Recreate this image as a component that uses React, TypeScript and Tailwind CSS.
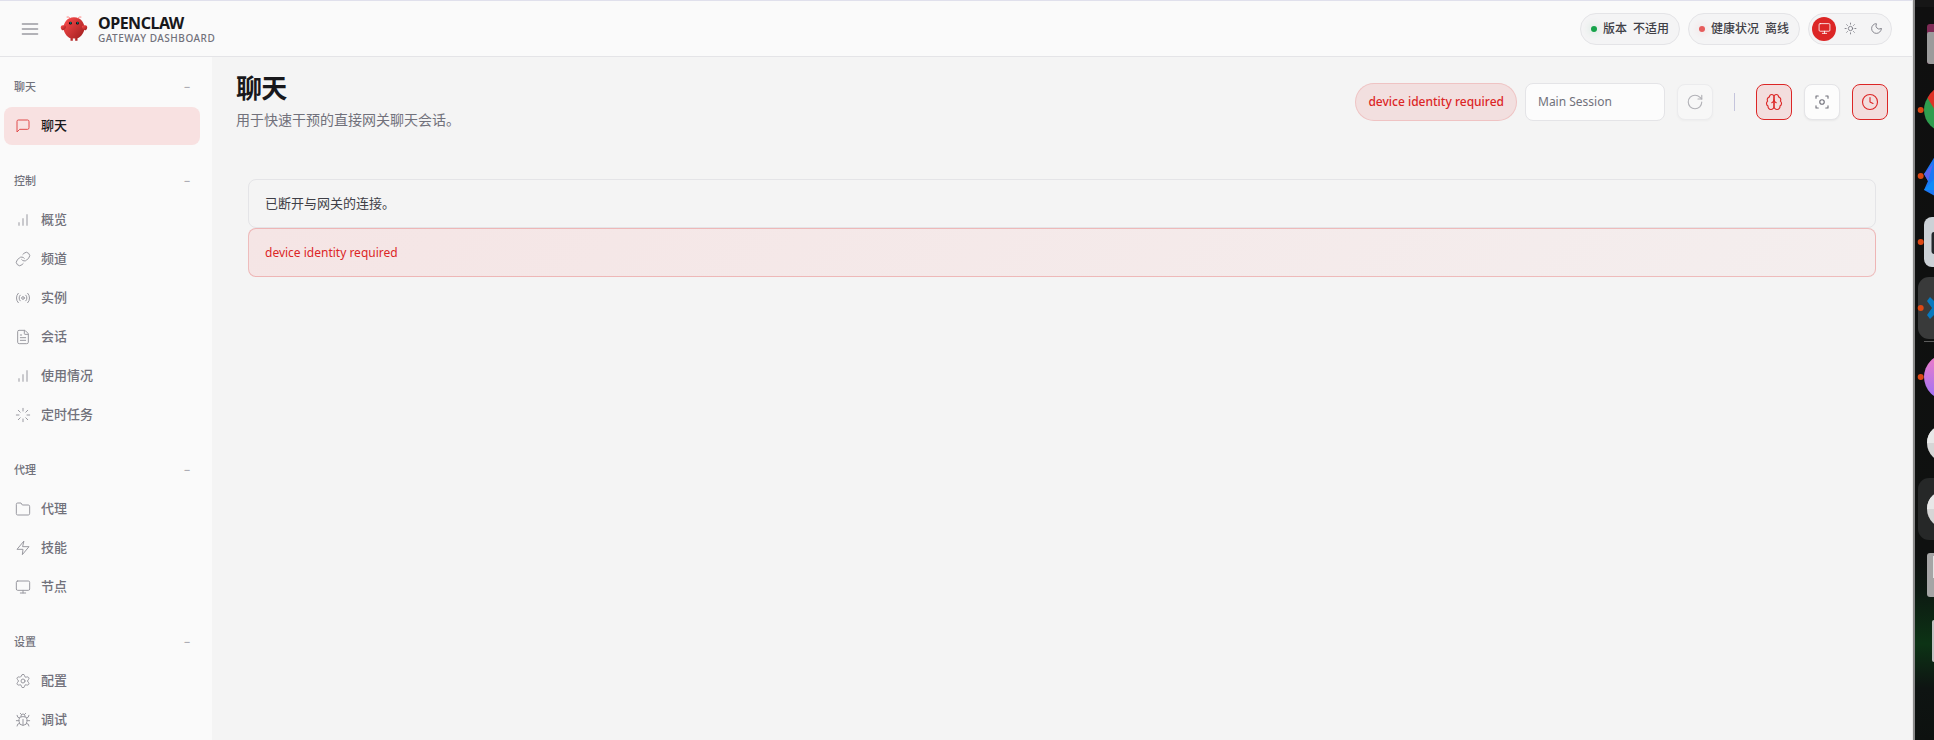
import type { ReactNode } from "react";
import { Bug, FileText, Link, Loader, Monitor, Moon, Radio, RotateCw, Settings } from "lucide-react";

type IconProps = { children: ReactNode; size?: number };

function Icon({ children, size = 16 }: IconProps) {
  return (
    <svg
      width={size}
      height={size}
      viewBox="0 0 24 24"
      fill="none"
      stroke="currentColor"
      strokeWidth={1.5}
      strokeLinecap="round"
      strokeLinejoin="round"
      className="shrink-0"
      aria-hidden="true"
    >
      {children}
    </svg>
  );
}

const chatIcon = (
  <Icon>
    <path d="M21 15a2 2 0 0 1-2 2H7l-4 4V5a2 2 0 0 1 2-2h14a2 2 0 0 1 2 2z" />
  </Icon>
);

const barsIcon = (
  <Icon>
    <path d="M12 20V10M18 20V4M6 20v-4" />
  </Icon>
);

const folderIcon = (
  <Icon>
    <path d="M22 19a2 2 0 0 1-2 2H4a2 2 0 0 1-2-2V5a2 2 0 0 1 2-2h5l2 3h9a2 2 0 0 1 2 2z" />
  </Icon>
);

const zapIcon = (
  <Icon>
    <path d="M13 2 3 14h9l-1 8 10-12h-9z" />
  </Icon>
);

const GROUPS = [
  { title: "聊天", items: [{ label: "聊天", icon: chatIcon, active: true }] },
  {
    title: "控制",
    items: [
      { label: "概览", icon: barsIcon },
      { label: "频道", icon: <Link size={16} strokeWidth={1.5} /> },
      { label: "实例", icon: <Radio size={16} strokeWidth={1.5} /> },
      { label: "会话", icon: <FileText size={16} strokeWidth={1.5} /> },
      { label: "使用情况", icon: barsIcon },
      { label: "定时任务", icon: <Loader size={16} strokeWidth={1.5} /> },
    ],
  },
  {
    title: "代理",
    items: [
      { label: "代理", icon: folderIcon },
      { label: "技能", icon: zapIcon },
      { label: "节点", icon: <Monitor size={16} strokeWidth={1.5} /> },
    ],
  },
  {
    title: "设置",
    items: [
      { label: "配置", icon: <Settings size={16} strokeWidth={1.5} /> },
      { label: "调试", icon: <Bug size={16} strokeWidth={1.5} /> },
    ],
  },
];

function Logo() {
  return (
    <svg width="28" height="28" viewBox="0 0 120 120" fill="none" aria-hidden="true">
      <defs>
        <linearGradient id="claw" x1="0%" y1="0%" x2="100%" y2="100%">
          <stop offset="0%" stopColor="#ff4d4d" />
          <stop offset="100%" stopColor="#991b1b" />
        </linearGradient>
      </defs>
      <path
        d="M60 10C30 10 15 35 15 55C15 75 30 95 45 100L45 110L55 110L55 100C55 100 60 102 65 100L65 110L75 110L75 100C90 95 105 75 105 55C105 35 90 10 60 10Z"
        fill="url(#claw)"
      />
      <path d="M20 45C5 40 0 50 5 60C10 70 20 65 25 55C28 48 25 45 20 45Z" fill="url(#claw)" />
      <path d="M100 45C115 40 120 50 115 60C110 70 100 65 95 55C92 48 95 45 100 45Z" fill="url(#claw)" />
      <path d="M45 15Q35 5 30 8M75 15Q85 5 90 8" stroke="#ff4d4d" strokeWidth="3" strokeLinecap="round" />
      <circle cx="45" cy="35" r="6" fill="#050810" />
      <circle cx="75" cy="35" r="6" fill="#050810" />
      <circle cx="46" cy="34" r="2.5" fill="#00e5cc" />
      <circle cx="76" cy="34" r="2.5" fill="#00e5cc" />
    </svg>
  );
}

function Header() {
  return (
    <header className="flex h-14 shrink-0 items-center justify-between border-b border-zinc-200 bg-[#fafafa] pl-3 pr-5">
      <div className="flex items-center gap-3">
        <button type="button" aria-label="菜单" className="flex size-9 items-center justify-center text-zinc-500/70">
          <Icon size={20}>
            <path d="M3 12h18M3 6h18M3 18h18" strokeWidth={2} />
          </Icon>
        </button>
        <div className="flex items-center gap-[10px]">
          <Logo />
          <div>
            <div className="text-[16px] leading-[18px] font-bold tracking-[-0.03em] text-zinc-900">OPENCLAW</div>
            <div className="text-[10px] leading-[12px] font-medium tracking-[0.05em] text-zinc-500">
              GATEWAY DASHBOARD
            </div>
          </div>
        </div>
      </div>
      <div className="flex items-center gap-2">
        <StatusPill label="版本" value="不适用" dot="bg-[#16a34a] shadow-[0_0_8px_rgba(22,163,74,0.3)]" />
        <StatusPill label="健康状况" value="离线" dot="bg-[#e65c5c] shadow-[0_0_8px_rgba(220,38,38,0.2)]" />
        <div className="flex h-8 items-center gap-[2px] rounded-full border border-zinc-200 bg-[#f4f4f5] px-[3px]">
          <button type="button" aria-label="系统主题" className="flex size-6 items-center justify-center rounded-full bg-[#dc2626] text-white">
            <Monitor size={13} strokeWidth={1.5} />
          </button>
          <button type="button" aria-label="浅色主题" className="flex size-6 items-center justify-center text-zinc-500">
            <Icon size={13}>
              <circle cx="12" cy="12" r="4" />
              <path d="M12 2v2M12 20v2M4.93 4.93l1.41 1.41M17.66 17.66l1.41 1.41M2 12h2M20 12h2M6.34 17.66l-1.41 1.41M19.07 4.93l-1.41 1.41" />
            </Icon>
          </button>
          <button type="button" aria-label="深色主题" className="flex size-6 items-center justify-center text-zinc-500">
            <Moon size={13} strokeWidth={1.5} />
          </button>
        </div>
      </div>
    </header>
  );
}

function StatusPill({ label, value, dot }: { label: string; value: string; dot: string }) {
  return (
    <div className="flex h-8 items-center gap-[6px] rounded-full border border-zinc-200 bg-[#f4f4f5] px-[10px] text-[12px] font-medium text-zinc-700">
      <span className={`size-[6px] rounded-full ${dot}`} />
      <span>{label}</span>
      <span>{value}</span>
    </div>
  );
}

function Sidebar() {
  return (
    <nav className="flex w-[212px] shrink-0 flex-col gap-[22px] overflow-hidden bg-[#fafafa] pt-4 pr-3 pl-1">
      {GROUPS.map((group) => (
        <div key={group.title} className="flex shrink-0 flex-col gap-[6px]">
          <button
            type="button"
            className="flex h-7 items-center justify-between px-[10px] text-[11px] font-medium text-zinc-500"
          >
            <span>{group.title}</span>
            <span className="text-zinc-400">−</span>
          </button>
          <div className="flex flex-col gap-px">
            {group.items.map((item) => (
              <a
                key={item.label}
                href="#"
                className={`flex h-[38px] items-center gap-[10px] rounded-lg px-[11px] text-[13px] font-medium ${
                  "active" in item ? "bg-[#f8e1e1] text-zinc-900" : "text-zinc-500"
                }`}
              >
                <span className={"active" in item ? "text-[#dc2626] opacity-80" : "opacity-70"}>{item.icon}</span>
                {item.label}
              </a>
            ))}
          </div>
        </div>
      ))}
    </nav>
  );
}

function ChatControls() {
  return (
    <div className="flex items-center gap-2">
      <div className="flex h-[38px] items-center rounded-full border border-[#dc2626]/15 bg-[#f2dfdf] px-3 text-[12px] font-medium text-[#dc2626]">
        device identity required
      </div>
      <div className="flex items-center gap-3">
        <select
          disabled
          aria-label="会话"
          className="h-[38px] w-[140px] appearance-none rounded-lg border border-zinc-200 bg-[#fcfcfc] px-3 text-[12px] text-zinc-500 opacity-100"
        >
          <option>Main Session</option>
        </select>
        <button
          type="button"
          disabled
          aria-label="刷新"
          className="flex size-9 items-center justify-center rounded-lg border border-zinc-200 bg-[#fafafa] text-zinc-500 opacity-50 shadow-xs"
        >
          <RotateCw size={18} strokeWidth={1.5} />
        </button>
        <span className="mx-[9px] h-[18px] w-px bg-[#c4c4dc]" />
        <button
          type="button"
          aria-label="显示思考"
          className="flex size-9 items-center justify-center rounded-lg border border-[#dc2626] bg-[#f3dddd] text-[#dc2626]"
        >
          <Icon size={18}>
            <path d="M12 5a3 3 0 1 0-5.997.125 4 4 0 0 0-2.526 5.77 4 4 0 0 0 .556 6.588A4 4 0 1 0 12 18Z" />
            <path d="M12 5a3 3 0 1 1 5.997.125 4 4 0 0 1 2.526 5.77 4 4 0 0 1-.556 6.588A4 4 0 1 1 12 18Z" />
            <path d="M15 13a4.5 4.5 0 0 1-3-4 4.5 4.5 0 0 1-3 4" />
          </Icon>
        </button>
        <button
          type="button"
          aria-label="专注模式"
          className="flex size-9 items-center justify-center rounded-lg border border-zinc-200 bg-[#fcfcfc] text-zinc-500 shadow-xs"
        >
          <Icon size={18}>
            <path d="M4 7V4h3M20 7V4h-3M4 17v3h3M20 17v3h-3" />
            <circle cx="12" cy="12" r="3" />
          </Icon>
        </button>
        <button
          type="button"
          aria-label="定时会话"
          className="flex size-9 items-center justify-center rounded-lg border border-[#dc2626] bg-[#f3dddd] text-[#dc2626]"
        >
          <Icon size={18}>
            <circle cx="12" cy="12" r="10" />
            <path d="M12 6v6l4 2" />
          </Icon>
        </button>
      </div>
    </div>
  );
}

function DockItem({ label, running, children }: { label: string; running?: boolean; children: ReactNode }) {
  return (
    <button type="button" aria-label={label} className="block h-[66px] w-full shrink-0">
      <svg width="19" height="66" viewBox="0 0 19 66" aria-hidden="true">
        {children}
        {running && <circle cx="5.7" cy="33" r="3" fill="#dd4814" />}
      </svg>
    </button>
  );
}

function Dock() {
  return (
    <aside className="flex w-[21px] shrink-0 flex-col overflow-hidden border-l-2 border-[#8a8a8a] bg-[linear-gradient(#0f0f0f_0%,#0f1110_75%,#0d1a12_80%,#0c3315_87%,#0e1412_93%,#0d110f_100%)]">
      <div className="h-[7px] shrink-0 bg-[#161616]" />
      <div className="flex flex-col pt-1">
        <DockItem label="Files">
          <rect x="12" y="13" width="20" height="40" rx="3" fill="#7f2b56" />
          <path d="M12 23a2 2 0 0 1 2-2h6v32h-5a3 3 0 0 1-3-3z" fill="#9b9b9b" />
        </DockItem>
        <DockItem label="Chrome" running>
          <circle cx="31" cy="33" r="22" fill="#2f9e4f" />
          <path d="M12.500 21Q15 16 20 12v21z" fill="#de3327" />
        </DockItem>
        <DockItem label="Feishu" running>
          <path d="M9 31 20 13v40L9 47l4-9z" fill="#1b78f5" />
          <path d="m9 31 9-10-5 17z" fill="#5a63ee" />
          <path d="M9 47 19 36v11z" fill="#0f8cf8" />
        </DockItem>
        <DockItem label="Terminal" running>
          <rect x="9" y="8" width="40" height="50" rx="8" fill="#ccd1d6" />
          <rect x="16.500" y="23" width="20" height="22" rx="3" fill="#24282c" />
        </DockItem>
        <DockItem label="Code" running>
          <rect x="3" y="2" width="62" height="62" rx="11" fill="#393a3a" />
          <path d="M12 26l3-4 5 5v12l-5 5-3-4 5-7z" fill="#0879be" />
        </DockItem>
        <div className="ml-[9px] h-[3px] border-t border-[#5c5c5c]" />
        <DockItem label="Music" running>
          <defs>
            <linearGradient id="music" x1="0" y1="0" x2="0" y2="1">
              <stop offset="0%" stopColor="#f27cc4" />
              <stop offset="100%" stopColor="#9b72fa" />
            </linearGradient>
          </defs>
          <circle cx="32" cy="33" r="23" fill="url(#music)" />
        </DockItem>
        <DockItem label="Disk">
          <circle cx="31" cy="33" r="19" fill="#d6d6d6" />
          <path d="M12 33q0-10 8-15v15z" fill="#e8e8e8" />
        </DockItem>
        <DockItem label="Disk 2">
          <rect x="3" y="2" width="62" height="62" rx="11" fill="#262828" />
          <circle cx="31" cy="33" r="19" fill="#d6d6d6" />
          <path d="M12 33q0-10 8-15v15z" fill="#e8e8e8" />
        </DockItem>
        <DockItem label="Drive">
          <rect x="12" y="11" width="20" height="44" rx="3" fill="#a5a5a5" />
          <rect x="18" y="14" width="10" height="22" fill="#e4e4e4" />
        </DockItem>
        <DockItem label="Trash">
          <rect x="17" y="12" width="20" height="42" rx="2" fill="#c3c3c3" />
        </DockItem>
      </div>
    </aside>
  );
}

export default function App() {
  return (
    <div className="flex h-screen overflow-hidden bg-[#f4f4f4] font-['Noto_Sans','Noto_Sans_CJK_SC',sans-serif]">
      <div className="flex min-w-0 flex-1 flex-col border-t border-r border-t-[#e0e0ec] border-r-[#e8e8e8]">
        <Header />
        <div className="flex min-h-0 flex-1">
          <Sidebar />
          <main className="min-w-0 flex-1 px-6 pt-4">
            <div className="flex items-start justify-between">
              <div>
                <h1 className="text-[26px] leading-[30px] font-bold tracking-[-0.03em] text-zinc-900">聊天</h1>
                <p className="mt-[6px] text-[14px] leading-[22px] text-zinc-500">用于快速干预的直接网关聊天会话。</p>
              </div>
              <div className="pt-[10px]">
                <ChatControls />
              </div>
            </div>
            <div className="mt-12 px-3 leading-[19px]">
              <div className="rounded-lg border border-zinc-200 bg-[#f4f4f4] px-4 py-[14px] text-[13px] text-zinc-700">
                已断开与网关的连接。
              </div>
              <div
                role="alert"
                className="rounded-lg border border-[#dc2626]/25 bg-linear-135 from-[#f5e5e5] to-[#f4eeee] px-4 py-[14px] text-[12px] text-[#dc2626]"
              >
                device identity required
              </div>
            </div>
          </main>
        </div>
      </div>
      <Dock />
    </div>
  );
}
